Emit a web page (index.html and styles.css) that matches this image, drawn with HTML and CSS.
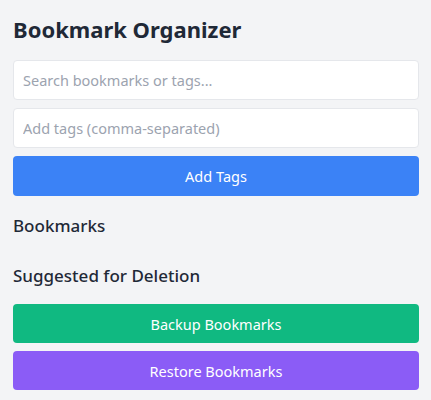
FILE: index.html
```html
<!DOCTYPE html>
<html lang="en">
<head>
  <meta charset="UTF-8" />
  <meta name="viewport" content="width=device-width, initial-scale=1.0"/>
  <title>Bookmark Organizer</title>
  <link rel="stylesheet" href="styles.css">
</head>
<body>
  <h1>Bookmark Organizer</h1>

  <input type="text" id="search" class="field" placeholder="Search bookmarks or tags...">
  <input type="text" id="tags" class="field" placeholder="Add tags (comma-separated)">
  <button id="add-tags" class="btn btn-blue">Add Tags</button>

  <h2>Bookmarks</h2>
  <div id="bookmark-list"></div>

  <h2>Suggested for Deletion</h2>
  <div id="deletion-list"></div>

  <button id="backup-btn" class="btn btn-green">Backup Bookmarks</button>
  <button id="restore-btn" class="btn btn-purple">Restore Bookmarks</button>
</body>
</html>
```

FILE: styles.css
```css
* {
  margin: 0;
  padding: 0;
  box-sizing: border-box;
}
body {
  font-family: "Noto Sans", Arial, sans-serif;
  background-color: #f3f4f6;
  color: #1f2937;
  padding: 14px 12px 10px 13px;
  display: flex;
  flex-direction: column;
}
h1 {
  font-size: 22px;
  font-weight: 700;
  line-height: 30px;
  margin-bottom: 16px;
}
.field {
  height: 40px;
  border: 1px solid #e5e7eb;
  border-radius: 4px;
  background: #fff;
  padding: 0 9px;
  font-family: inherit;
  font-size: 14.5px;
  color: #1f2937;
  margin-bottom: 8px;
}
.field::placeholder {
  color: #9ca3af;
}
.btn {
  height: 39px;
  border: none;
  border-radius: 4px;
  color: #fff;
  font-family: inherit;
  font-size: 14.5px;
  cursor: pointer;
  margin-bottom: 8px;
}
.btn-blue {
  background-color: #3b82f6;
  height: 40px;
}
.btn-green {
  background-color: #10b981;
}
.btn-purple {
  background-color: #8b5cf6;
}
h2 {
  font-size: 17px;
  font-weight: 500;
  color: #1f2937;
  line-height: 24px;
  margin-top: 10px;
  margin-bottom: 16px;
}
```
